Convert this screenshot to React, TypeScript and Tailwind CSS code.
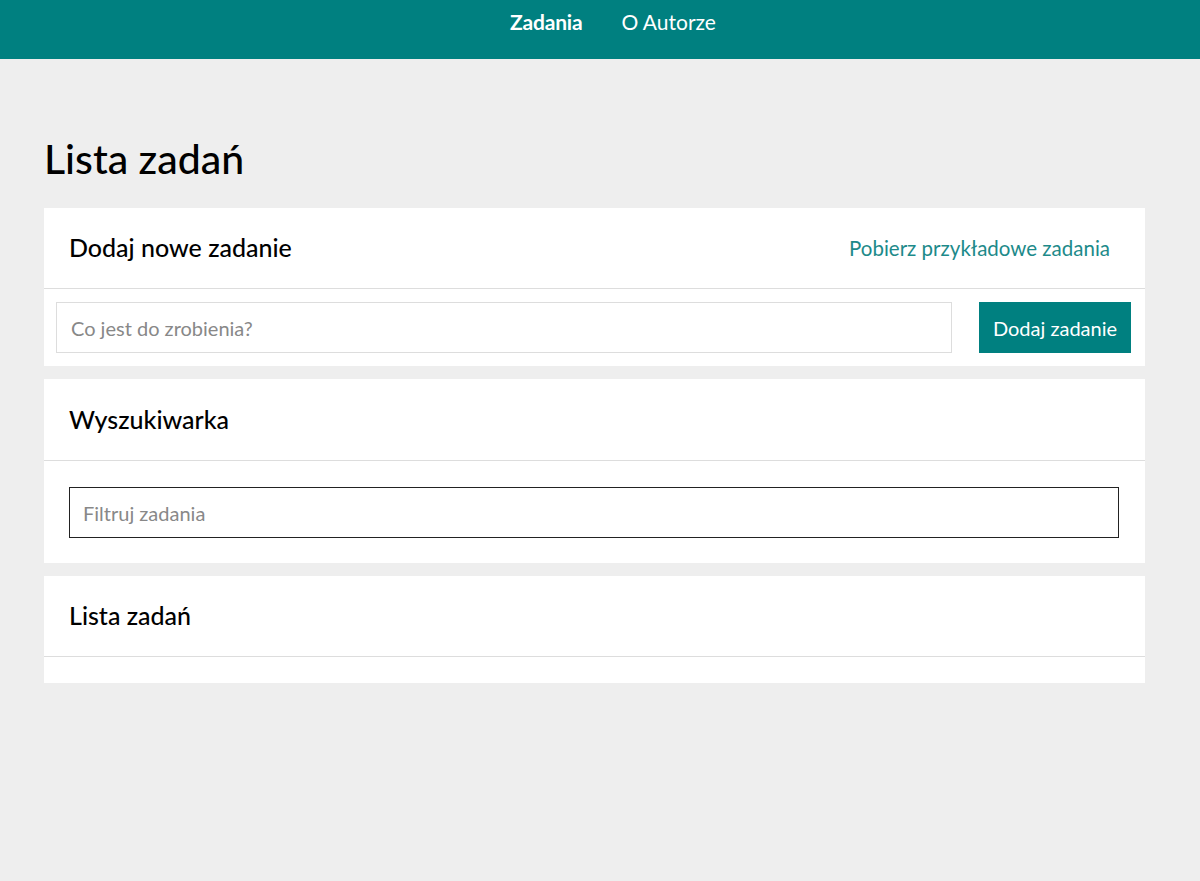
import React from "react";

export default function App() {
  return (
    <div className="min-h-[881px] bg-[#eeeeee] font-['Lato',sans-serif] text-black">
      <header className="h-[59px] bg-[#008080] flex justify-center items-start pt-[8px] gap-[39px] pl-[26px]">
        <a className="text-[21px] font-bold text-white leading-[28px] tracking-[-0.2px]">Zadania</a>
        <a className="text-[21px] text-white leading-[28px]">O Autorze</a>
      </header>
      <main className="ml-[44px] w-[1101px]">
        <h1 className="mt-[76px] text-[41px] leading-[48px] font-medium">Lista zadań</h1>
        <section className="mt-[25px] bg-white">
          <div className="h-[81px] flex items-center justify-between pl-[25px] pr-[35px] border-b border-[#dddddd]">
            <h2 className="text-[25px] font-medium">Dodaj nowe zadanie</h2>
            <a className="text-[20.5px] text-[#1d8a8a]">Pobierz przykładowe zadania</a>
          </div>
          <div className="flex items-center pt-[13px] pb-[13px] pl-[12px] pr-[14px] gap-[27px]">
            <input
              className="flex-1 h-[51px] border border-[#dddddd] px-[14px] text-[20px] placeholder:text-[#888888] outline-none"
              placeholder="Co jest do zrobienia?"
            />
            <button className="h-[51px] w-[152px] bg-[#008080] text-white text-[20px]">Dodaj zadanie</button>
          </div>
        </section>
        <section className="mt-[13px] bg-white">
          <div className="h-[82px] flex items-center pl-[25px] border-b border-[#dddddd]">
            <h2 className="text-[25px] font-medium">Wyszukiwarka</h2>
          </div>
          <div className="pt-[26px] pb-[25px] pl-[25px] pr-[26px]">
            <input
              className="w-full h-[51px] border border-[#222222] px-[13px] text-[20px] placeholder:text-[#888888] outline-none"
              placeholder="Filtruj zadania"
            />
          </div>
        </section>
        <section className="mt-[13px] bg-white">
          <div className="h-[81px] flex items-center pl-[25px] border-b border-[#dddddd]">
            <h2 className="text-[25px] font-medium">Lista zadań</h2>
          </div>
          <div className="h-[26px]"></div>
        </section>
      </main>
    </div>
  );
}
